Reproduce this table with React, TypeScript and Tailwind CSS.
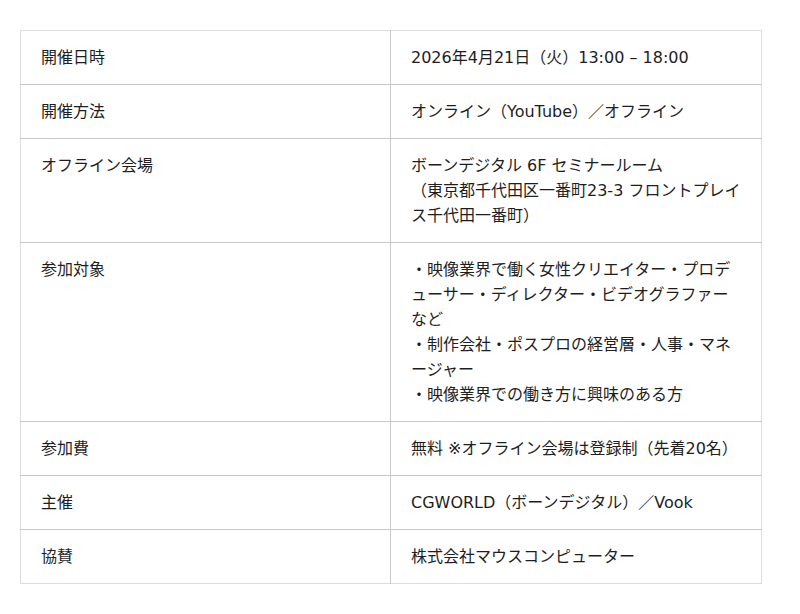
import React from "react";

type Row = { label: string; value: React.ReactNode };

const rows: Row[] = [
  { label: "開催日時", value: "2026年4月21日（火）13:00 – 18:00" },
  { label: "開催方法", value: "オンライン（YouTube）／オフライン" },
  {
    label: "オフライン会場",
    value: (
      <>
        ボーンデジタル 6F セミナールーム
        <br />
        （東京都千代田区一番町23-3 フロントプレイス千代田一番町）
      </>
    ),
  },
  {
    label: "参加対象",
    value: (
      <>
        ・映像業界で働く女性クリエイター・プロデューサー・ディレクター・ビデオグラファーなど
        <br />
        ・制作会社・ポスプロの経営層・人事・マネージャー
        <br />
        ・映像業界での働き方に興味のある方
      </>
    ),
  },
  { label: "参加費", value: "無料 ※オフライン会場は登録制（先着20名）" },
  { label: "主催", value: "CGWORLD（ボーンデジタル）／Vook" },
  { label: "協賛", value: "株式会社マウスコンピューター" },
];

export default function App() {
  return (
    <div
      className="bg-white min-h-screen pt-[30px] pl-[20px] text-[16px] leading-[25px] text-[#1e1e1e] [text-spacing-trim:space-all]"
      style={{ fontFamily: '"DejaVu Sans", "Noto Sans CJK JP", sans-serif' }}
    >
      <table className="w-[742px] table-fixed border-collapse border border-[#dcdcdc]">
        <tbody>
          {rows.map((row, i) => (
            <tr key={i} className={i < rows.length - 1 ? "border-b border-[#c8c8c8]" : ""}>
              <td className="w-[370px] align-top px-[20px] py-[14px] border-r border-[#c8c8c8]">{row.label}</td>
              <td className="align-top px-[20px] py-[14px]">{row.value}</td>
            </tr>
          ))}
        </tbody>
      </table>
    </div>
  );
}
